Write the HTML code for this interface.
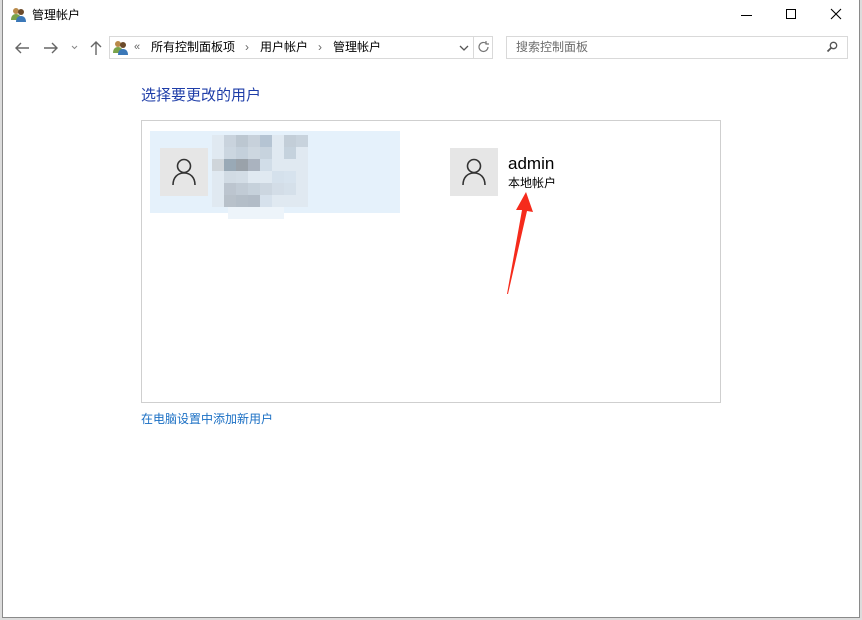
<!DOCTYPE html>
<html><head><meta charset="utf-8"><style>
*{margin:0;padding:0;box-sizing:border-box}
body{width:862px;height:620px;background:#dcdcdc;position:relative;overflow:hidden;font-family:"Liberation Sans","Noto Sans CJK SC",sans-serif}
.win{position:absolute;left:2px;top:0;width:858px;height:618px;background:#fff;border:1px solid #8a8a8a;border-top:none}
.a{position:absolute}
.t{font-size:12px;color:#000;white-space:nowrap;line-height:14px}
.px{position:absolute;width:12px;height:12px}
</style></head><body>
<div class="win"></div>
<svg class="a" style="left:10px;top:6px" width="18" height="16" viewBox="0 0 18 16"><circle cx="6" cy="5" r="3" fill="#b98a4a"/><path d="M1 14c0-4 2-6 5-6s5 2 5 6z" fill="#7aa34a"/><circle cx="11" cy="6" r="3" fill="#6b4a2a"/><path d="M6 16c0-4 2-6 5-6s5 2 5 6z" fill="#3b78b8"/></svg>
<div class="a t" style="left:32px;top:8px">管理帐户</div>
<div class="a" style="left:741px;top:15px;width:11px;height:1px;background:#000"></div>
<div class="a" style="left:786px;top:9px;width:10px;height:10px;border:1px solid #000"></div>
<svg class="a" style="left:830px;top:8px" width="12" height="12"><path d="M1 1L11 11M11 1L1 11" stroke="#000" stroke-width="1.1"/></svg>
<svg class="a" style="left:14px;top:40px" width="90" height="16" viewBox="0 0 90 16"><path d="M2 8h13M7 3L2 8l5 5" fill="none" stroke="#666" stroke-width="1.4"/><path d="M30 8h13M38 3l5 5-5 5" fill="none" stroke="#666" stroke-width="1.4"/><path d="M58 6l2.5 2.5L63 6" fill="none" stroke="#888" stroke-width="1"/><path d="M82 15V2M77 7l5-5 5 5" fill="none" stroke="#666" stroke-width="1.4"/></svg>
<div class="a" style="left:109px;top:36px;width:384px;height:23px;border:1px solid #d9d9d9"></div>
<div class="a" style="left:473px;top:37px;width:1px;height:21px;background:#d9d9d9"></div>
<svg class="a" style="left:112px;top:39px" width="18" height="16" viewBox="0 0 18 16"><circle cx="6" cy="5" r="3" fill="#b98a4a"/><path d="M1 14c0-4 2-6 5-6s5 2 5 6z" fill="#7aa34a"/><circle cx="11" cy="6" r="3" fill="#6b4a2a"/><path d="M6 16c0-4 2-6 5-6s5 2 5 6z" fill="#3b78b8"/></svg>
<div class="a t" style="left:134px;top:40px;color:#666;font-size:11px">«</div>
<div class="a t" style="left:151px;top:40px">所有控制面板项</div>
<div class="a t" style="left:245px;top:40px;color:#666">›</div>
<div class="a t" style="left:260px;top:40px">用户帐户</div>
<div class="a t" style="left:318px;top:40px;color:#666">›</div>
<div class="a t" style="left:333px;top:40px">管理帐户</div>
<svg class="a" style="left:459px;top:44px" width="10" height="8"><path d="M1 2l4 4 4-4" fill="none" stroke="#555" stroke-width="1.3"/></svg>
<svg class="a" style="left:477px;top:40px" width="14" height="14" viewBox="0 0 14 14"><path d="M11 7a4.5 4.5 0 1 1-1.5-3.4" fill="none" stroke="#777" stroke-width="1.2"/><path d="M9 1v3h3" fill="none" stroke="#777" stroke-width="1.2"/></svg>
<div class="a" style="left:506px;top:36px;width:342px;height:23px;border:1px solid #d9d9d9"></div>
<div class="a t" style="left:516px;top:40px;color:#6d6d6d">搜索控制面板</div>
<svg class="a" style="left:826px;top:41px" width="12" height="12"><circle cx="7.5" cy="4.5" r="3.2" fill="none" stroke="#555" stroke-width="1.3"/><path d="M5.5 6.5L1.5 10.5" stroke="#555" stroke-width="1.8"/></svg>
<div class="a" style="left:141px;top:87px;font-size:15px;line-height:18px;color:#1e3da8;white-space:nowrap">选择要更改的用户</div>
<div class="a" style="left:141px;top:120px;width:580px;height:283px;border:1px solid #cfcfcf"></div>
<div class="a" style="left:150px;top:131px;width:250px;height:82px;background:#e5f1fb"></div>
<div class="a" style="left:160px;top:148px;width:48px;height:48px;background:#e6e6e6"></div>
<svg class="a" style="left:171px;top:157px" width="26" height="30" viewBox="0 0 26 30"><circle cx="13" cy="9" r="6.5" fill="none" stroke="#333" stroke-width="1.6"/><path d="M2 28c0-7.5 4.5-12 11-12s11 4.5 11 12" fill="none" stroke="#333" stroke-width="1.6"/></svg>
<div class="a" style="left:212px;top:135px;width:96px;height:72px;background:#e0e9f1"></div>
<div class="px" style="left:224px;top:135px;background:#c9d3dd"></div><div class="px" style="left:236px;top:135px;background:#bcc7d1"></div><div class="px" style="left:248px;top:135px;background:#c7d1db"></div><div class="px" style="left:260px;top:135px;background:#b5c4d3"></div><div class="px" style="left:284px;top:135px;background:#c3ced8"></div><div class="px" style="left:296px;top:135px;background:#c8d3dd"></div>
<div class="px" style="left:224px;top:147px;background:#cbd6e0"></div><div class="px" style="left:236px;top:147px;background:#c4d0db"></div><div class="px" style="left:248px;top:147px;background:#cdd7e0"></div><div class="px" style="left:260px;top:147px;background:#c7d3de"></div><div class="px" style="left:284px;top:147px;background:#c5d2dd"></div>
<div class="px" style="left:212px;top:159px;background:#cfd5da"></div><div class="px" style="left:224px;top:159px;background:#99a9b6"></div><div class="px" style="left:236px;top:159px;background:#9aa2aa"></div><div class="px" style="left:248px;top:159px;background:#aab3bf"></div><div class="px" style="left:260px;top:159px;background:#d1dde8"></div>
<div class="px" style="left:224px;top:171px;background:#d1dbe4"></div><div class="px" style="left:236px;top:171px;background:#d3dde6"></div><div class="px" style="left:272px;top:171px;background:#d5e1ec"></div><div class="px" style="left:284px;top:171px;background:#d7e3ee"></div>
<div class="px" style="left:224px;top:183px;background:#bcc5cf"></div><div class="px" style="left:236px;top:183px;background:#c1cbd5"></div><div class="px" style="left:248px;top:183px;background:#c6d1db"></div><div class="px" style="left:260px;top:183px;background:#ccd6e0"></div><div class="px" style="left:272px;top:183px;background:#d3dde7"></div><div class="px" style="left:284px;top:183px;background:#d5e0ea"></div>
<div class="px" style="left:224px;top:195px;background:#b8c1ca"></div><div class="px" style="left:236px;top:195px;background:#b4bec8"></div><div class="px" style="left:248px;top:195px;background:#b2bcc7"></div><div class="px" style="left:260px;top:195px;background:#d6e1ec"></div>
<div class="a" style="left:228px;top:207px;width:56px;height:12px;background:#edf4fa"></div>
<div class="a" style="left:450px;top:148px;width:48px;height:48px;background:#e6e6e6"></div>
<svg class="a" style="left:461px;top:157px" width="26" height="30" viewBox="0 0 26 30"><circle cx="13" cy="9" r="6.5" fill="none" stroke="#333" stroke-width="1.6"/><path d="M2 28c0-7.5 4.5-12 11-12s11 4.5 11 12" fill="none" stroke="#333" stroke-width="1.6"/></svg>
<div class="a" style="left:508px;top:154px;font-size:17px;line-height:20px;color:#000">admin</div>
<div class="a t" style="left:508px;top:176px">本地帐户</div>
<svg class="a" style="left:500px;top:190px" width="40" height="110" viewBox="0 0 40 110"><path d="M26 2L16 20L22 20L7 104L8 104L27 21L33 22Z" fill="#f52b1c"/></svg>
<div class="a t" style="left:141px;top:412px;color:#1a6fc4">在电脑设置中添加新用户</div>
</body></html>
